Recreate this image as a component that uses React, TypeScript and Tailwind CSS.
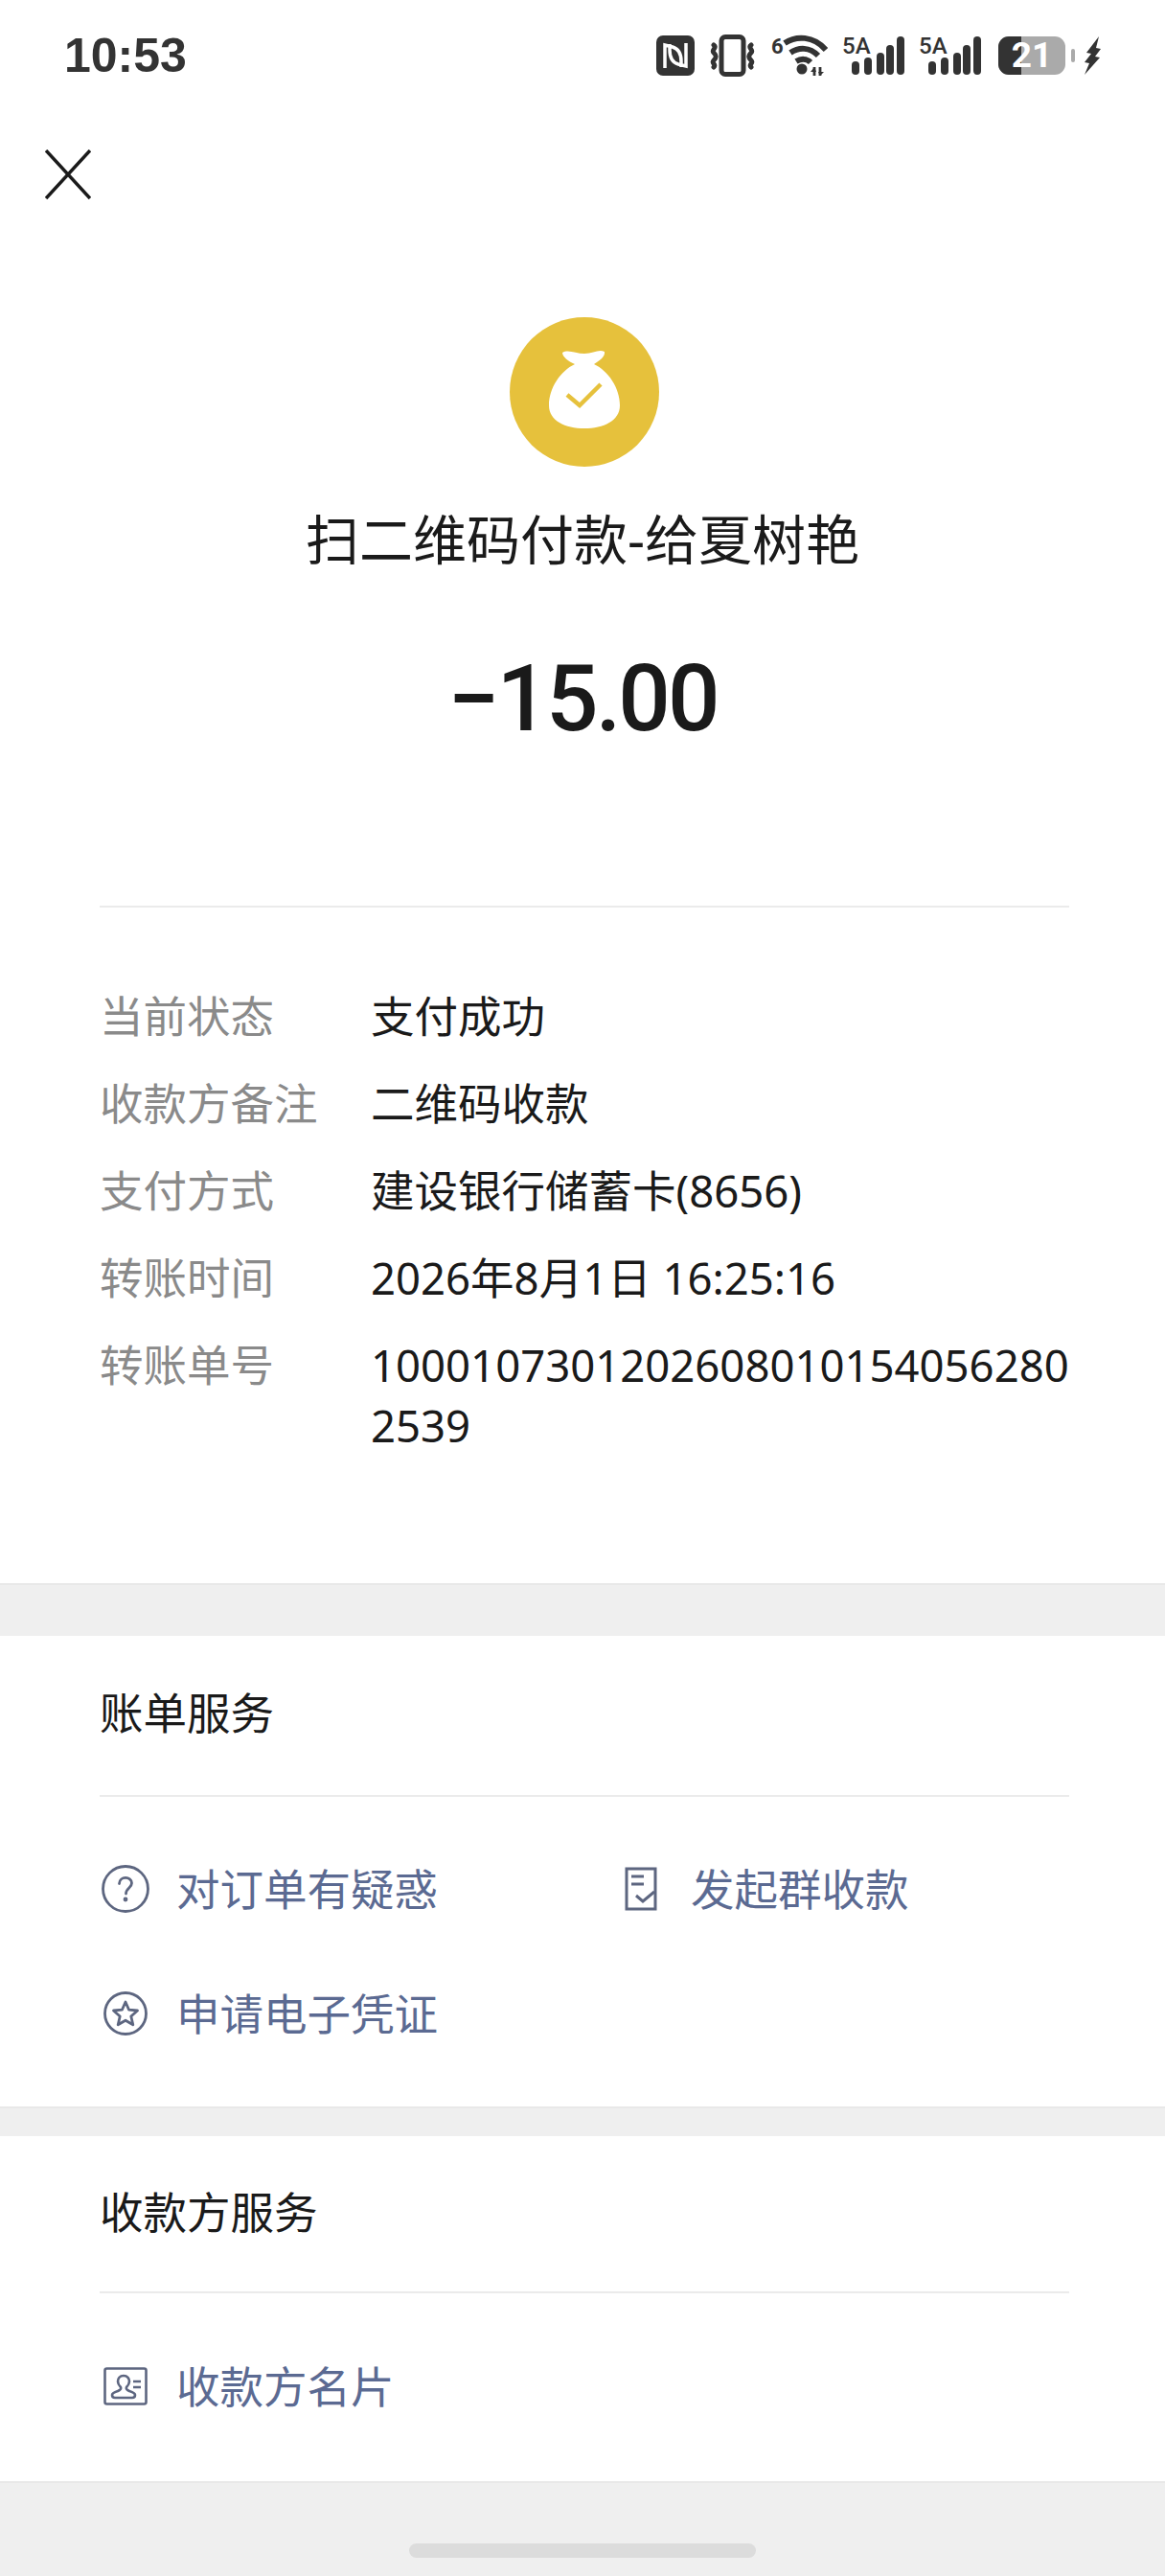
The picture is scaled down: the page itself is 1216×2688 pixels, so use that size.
import type { ReactNode } from "react";

const details: [string, string][] = [
  ["当前状态", "支付成功"],
  ["收款方备注", "二维码收款"],
  ["支付方式", "建设银行储蓄卡(8656)"],
  ["转账时间", "2026年8月1日 16:25:16"],
  ["转账单号", "10001073012026080101540562802539"],
];

const NfcIcon = () => (
  <svg width="40" height="42" viewBox="0 0 40 42">
    <rect width="40" height="42" rx="7" fill="#333" />
    <path d="M9 34V10l8 2c7 2 9 9 9 15v6M31 8v24l-8-2c-7-2-9-9-9-15V9" fill="none" stroke="#fff" strokeWidth="3.500" />
  </svg>
);

const VibrateIcon = () => (
  <svg width="49" height="44" viewBox="0 0 49 44" fill="none" stroke="#333">
    <rect x="13" y="2.500" width="23" height="39" rx="4" strokeWidth="5" />
    <path d="M5 11c4 3-3 5 0 8s3 5 0 8 3 4 0 7M44 11c-4 3 3 5 0 8s-3 5 0 8-3 4 0 7" strokeWidth="5" strokeLinecap="round" />
  </svg>
);

const WifiIcon = () => (
  <svg width="59" height="44" viewBox="0 0 59 44" fill="none">
    <text x="0" y="20" fontSize="22" fontWeight="700" fill="#333" fontFamily="Roboto, sans-serif">6</text>
    <path d="M14 9c12-8 30-8 43 7M20 19c9-6 20-6 29 3M26 28c5-3 11-3 15 1" stroke="#333" strokeWidth="6" />
    <circle cx="32" cy="36" r="5.500" fill="#333" />
    <path d="M45 34v9M51 34v9" stroke="#333" strokeWidth="2.800" />
    <path d="M41 39l4-5 2 5zM49 39l2 4 4-4z" fill="#333" />
  </svg>
);

const SignalIcon = () => (
  <div className="relative h-[44px] w-[65px]">
    <svg width="65" height="44" viewBox="0 0 65 44" className="block">
      <g fill="#333">
        <rect x="10" y="28" width="8" height="14" rx="4" />
        <rect x="23" y="24" width="8" height="18" rx="4" />
        <rect x="36" y="19" width="8" height="23" rx="4" />
        <rect x="46" y="11" width="8" height="31" rx="4" />
        <rect x="57" y="2" width="8" height="40" rx="4" />
      </g>
    </svg>
    <span
      className="absolute top-0 left-0 text-[24px] leading-[24px] font-medium text-[#333]"
      style={{ fontFamily: "Roboto, sans-serif" }}
    >
      5A
    </span>
  </div>
);

const BoltIcon = () => (
  <svg width="18" height="40" viewBox="0 0 18 40">
    <path d="M16 0L3 17l5 1-7 9 5 1-5 12 16-18-5-1 6-8-5-1z" fill="#333" />
  </svg>
);

const BagIcon = () => (
  <svg width="156" height="156" viewBox="0 0 156 156" className="ml-[4px] block">
    <circle cx="78" cy="78" r="78" fill="#e6c13c" />
    <path d="M55 37c6-4 14 1 23 1s15-5 21-2c1 5-5 9-11 13 15 7 27 25 27 43 0 16-17 24-37 24s-37-8-37-24c0-18 12-36 27-43-7-3-13-8-13-12z" fill="#fff" />
    <path d="M60 81l13 11 22-22" fill="none" stroke="#e6c13c" strokeWidth="4.500" />
  </svg>
);

const QuestionIcon = () => (
  <svg width="50" height="50" viewBox="0 0 50 50" fill="none" stroke="#5d6680" strokeWidth="2.800">
    <circle cx="25" cy="25" r="23.500" />
    <path d="M18.500 19.500c0-8 13-8 13-.5 0 5-6 5-6 11" strokeLinecap="round" />
    <circle cx="25" cy="36" r="1" fill="#5d6680" />
  </svg>
);

const StarIcon = () => (
  <svg width="46" height="46" viewBox="0 0 46 46" fill="none" stroke="#5d6680" strokeWidth="2.800">
    <circle cx="23" cy="23" r="21.500" />
    <path d="M23 11l3.600 8.200 8.900.8-6.700 6 2 8.800-7.800-4.600-7.800 4.600 2-8.800-6.700-6 8.900-.8z" strokeLinejoin="round" />
  </svg>
);

const DocIcon = () => (
  <svg width="34" height="46" viewBox="0 0 34 46" fill="none" stroke="#5d6680" strokeWidth="3">
    <path d="M32 24V2H2v42h30V24" />
    <path d="M7 10h13M7 18h13M12 30l7 6 12-10" />
  </svg>
);

const CardIcon = () => (
  <svg width="46" height="40" viewBox="0 0 46 40" fill="none" stroke="#5d6680" strokeWidth="2.600">
    <rect x="1.500" y="1.500" width="43" height="37" rx="2" />
    <path d="M21 9c-4 0-6 3-6 6 0 3 1 4 3 6 1 2-1 3-3 4-3 1-6 2-6 4 0 2 1 3 3 3h18c2 0 3-1 3-3 0-2-3-3-6-4-2-1-4-2-3-4 2-2 3-3 3-6 0-3-2-6-6-6z" />
    <path d="M31 15h8M31 21h8" />
  </svg>
);

const ServiceLink = ({ icon, slot, children }: { icon: ReactNode; slot: string; children: ReactNode }) => (
  <div className="flex h-[64px] items-center text-[45.5px] leading-[64px] text-[#5b6a92]">
    <div className={`flex shrink-0 items-center justify-center ${slot}`}>{icon}</div>
    {children}
  </div>
);

const Band = ({ className }: { className: string }) => (
  <div className={`border-t-2 border-[#e8e8e8] bg-[#efefef] ${className}`} />
);

export default function App() {
  return (
    <div
      className="flex min-h-[2688px] w-[1216px] flex-col bg-white text-[#1a1a1a]"
      style={{ fontFamily: '"Noto Sans", "Noto Sans CJK SC", sans-serif' }}
    >
      <div className="flex h-[116px] items-center justify-between px-[67px]">
        <span className="text-[50px] leading-none font-bold text-[#333]" style={{ fontFamily: '"Liberation Sans", sans-serif' }}>
          10:53
        </span>
        <div className="flex items-center">
          <NfcIcon />
          <div className="ml-[15px]"><VibrateIcon /></div>
          <div className="ml-[16px]"><WifiIcon /></div>
          <div className="ml-[15px]"><SignalIcon /></div>
          <div className="ml-[15px]"><SignalIcon /></div>
          <div className="relative ml-[18px] flex h-[40px] w-[70px] items-center justify-center rounded-[11px] bg-[#aaa]">
            <div className="absolute inset-y-0 left-0 w-[24px] rounded-l-[11px] bg-[#333]" />
            <span className="relative text-[37px] leading-[40px] font-bold text-white" style={{ fontFamily: "Roboto, sans-serif" }}>21</span>
          </div>
          <div className="ml-[6px] h-[14px] w-[4px] rounded-full bg-[#aaa]" />
          <div className="ml-[9px]"><BoltIcon /></div>
        </div>
      </div>

      <div className="pt-[40px] pl-[47px]">
        <svg width="48" height="52" viewBox="0 0 48 52" className="block" fill="none" stroke="#1a1a1a" strokeWidth="3.500">
          <path d="M1 1l46 50M47 1L1 51" />
        </svg>
      </div>

      <div className="flex flex-col items-center pt-[123px]">
        <BagIcon />
        <div className="mt-[35px] text-[56px] leading-[80px]">扫二维码付款-给夏树艳</div>
        <div
          className="mt-[67px] text-[96px] leading-[120px] font-medium tracking-[-3px]"
          style={{ fontFamily: "Roboto, sans-serif" }}
        >
          −15.00
        </div>
      </div>

      <div className="mt-[156px] mr-[100px] ml-[104px] border-t-2 border-[#ebebeb] pt-[82px] pb-[133px]">
        <div className="flex flex-col gap-[28px] text-[45.5px] leading-[63px]">
          {details.map(([label, value]) => (
            <div key={label} className="flex">
              <div className="w-[283px] shrink-0 text-[#8a8a8a]">{label}</div>
              <div className="-mr-[2px] min-w-0 flex-1 break-all">{value}</div>
            </div>
          ))}
        </div>
      </div>

      <Band className="h-[55px]" />

      <div className="pr-[100px] pl-[104px]">
        <div className="flex h-[168px] items-center border-b-2 border-[#ebebeb] pb-[6px] text-[45.5px]">账单服务</div>
        <div className="grid grid-cols-[548px_1fr] gap-y-[66px] pt-[64px] pb-[65px]">
          <ServiceLink icon={<QuestionIcon />} slot="w-[54px] mr-[26px]">对订单有疑惑</ServiceLink>
          <ServiceLink icon={<DocIcon />} slot="w-[34px] mr-[35px]">发起群收款</ServiceLink>
          <ServiceLink icon={<StarIcon />} slot="w-[54px] mr-[26px]">申请电子凭证</ServiceLink>
        </div>
      </div>

      <Band className="h-[31px]" />

      <div className="pr-[100px] pl-[104px]">
        <div className="flex h-[164px] items-center border-b-2 border-[#ebebeb] pb-[3px] text-[45.5px]">收款方服务</div>
        <div className="pt-[65px] pb-[67px]">
          <ServiceLink icon={<CardIcon />} slot="w-[54px] mr-[26px]">收款方名片</ServiceLink>
        </div>
      </div>

      <div className="flex flex-1 justify-center border-t-2 border-[#e8e8e8] bg-[#efefef] pt-[63px]">
        <div className="h-[15px] w-[362px] rounded-full bg-[#dcdcdc]" />
      </div>
    </div>
  );
}
